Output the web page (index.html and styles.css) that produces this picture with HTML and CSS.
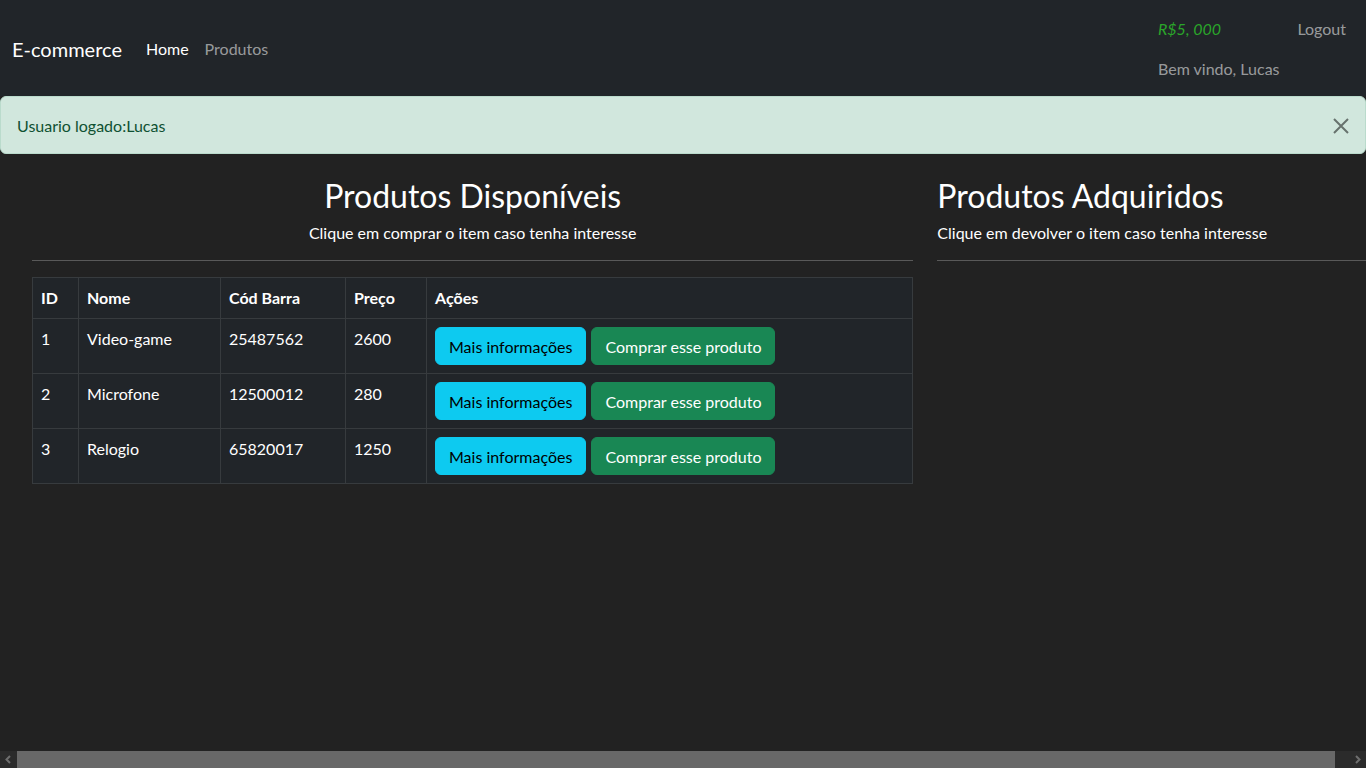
FILE: index.html
```html
<!DOCTYPE html>
<html lang="pt-BR">
<head>
<meta charset="utf-8">
<title>E-commerce</title>
<link rel="stylesheet" href="styles.css">
</head>
<body>
<nav class="navbar">
  <div class="nav-left">
    <a class="brand" href="#">E-commerce</a>
    <a class="nav-link active" href="#">Home</a>
    <a class="nav-link" href="#">Produtos</a>
  </div>
  <div class="nav-right">
    <div class="nav-row">
      <span class="nav-link saldo">R$5, 000</span>
      <a class="nav-link" href="#">Logout</a>
    </div>
    <div class="nav-row">
      <span class="nav-link">Bem vindo, Lucas</span>
    </div>
  </div>
</nav>

<div class="alert">
  <span>Usuario logado:Lucas</span>
  <button class="btn-close" aria-label="Fechar">
    <svg width="16" height="16" viewBox="0 0 16 16"><path d="M1 1L15 15M15 1L1 15" stroke="#000" stroke-width="2" fill="none"/></svg>
  </button>
</div>

<div class="row">
  <section class="col col-main">
    <h2 class="title centered">Produtos Disponíveis</h2>
    <p class="subtitle centered">Clique em comprar o item caso tenha interesse</p>
    <hr class="divider">
    <table class="table">
      <thead>
        <tr>
          <th class="c-id">ID</th>
          <th class="c-nome">Nome</th>
          <th class="c-cod">Cód Barra</th>
          <th class="c-preco">Preço</th>
          <th>Ações</th>
        </tr>
      </thead>
      <tbody>
        <tr>
          <td>1</td><td>Video-game</td><td>25487562</td><td>2600</td>
          <td><button class="btn btn-info">Mais informações</button> <button class="btn btn-success">Comprar esse produto</button></td>
        </tr>
        <tr>
          <td>2</td><td>Microfone</td><td>12500012</td><td>280</td>
          <td><button class="btn btn-info">Mais informações</button> <button class="btn btn-success">Comprar esse produto</button></td>
        </tr>
        <tr>
          <td>3</td><td>Relogio</td><td>65820017</td><td>1250</td>
          <td><button class="btn btn-info">Mais informações</button> <button class="btn btn-success">Comprar esse produto</button></td>
        </tr>
      </tbody>
    </table>
  </section>
  <section class="col col-side">
    <h2 class="title">Produtos Adquiridos</h2>
    <p class="subtitle">Clique em devolver o item caso tenha interesse</p>
    <hr class="divider">
  </section>
</div>

<div class="hscroll" aria-hidden="true">
  <span class="hscroll-arrow">
    <svg width="17" height="17" viewBox="0 0 17 17"><path d="M10 5L6.5 8.5L10 12" stroke="#6e6e6e" stroke-width="2" fill="none"/></svg>
  </span>
  <span class="hscroll-track"><span class="hscroll-thumb"></span></span>
  <span class="hscroll-arrow">
    <svg width="17" height="17" viewBox="0 0 17 17"><path d="M7 5L10.5 8.5L7 12" stroke="#6e6e6e" stroke-width="2" fill="none"/></svg>
  </span>
</div>
</body>
</html>
```

FILE: styles.css
```css
* { box-sizing: border-box; }

html, body {
  margin: 0;
  padding: 0;
}

html { overflow: hidden; }

body {
  background: #222222;
  color: #ffffff;
  font-family: "Lato", "Open Sans", sans-serif;
  font-size: 16px;
  line-height: 24px;
}

a { text-decoration: none; }

.navbar {
  background: #212529;
  height: 96px;
  padding: 9px 12px 7px;
  display: flex;
  align-items: center;
  justify-content: space-between;
}

.nav-left {
  display: flex;
  align-items: center;
}

.brand {
  color: #ffffff;
  font-size: 20px;
  line-height: 30px;
  margin-right: 16px;
}

.nav-link {
  display: block;
  padding: 8px;
  color: rgba(255, 255, 255, 0.55);
  line-height: 24px;
}

.nav-link.active { color: #ffffff; }

.nav-right {
  display: flex;
  flex-direction: column;
  width: 204px;
}

.nav-row {
  display: flex;
  justify-content: space-between;
}

.saldo {
  color: #2aa52a;
  font-style: italic;
}

.alert {
  background: #d1e7dd;
  color: #0f5132;
  border: 1px solid #badbcc;
  border-radius: 6px;
  padding: 17px 16px 15px;
  display: flex;
  align-items: center;
  justify-content: space-between;
  height: 58px;
}

.btn-close {
  background: none;
  border: 0;
  padding: 0;
  width: 16px;
  height: 16px;
  opacity: 0.5;
  display: flex;
}

.row {
  display: flex;
  margin-left: 20px;
  width: 1358px;
  padding-top: 23px;
}

.col { padding: 0 12px; }
.col-main { width: 66.6667%; }
.col-side { width: 33.3333%; }

.title {
  font-size: 32px;
  font-weight: 400;
  line-height: 38px;
  margin: 0 0 6px;
}

.subtitle {
  margin: 0;
}

.centered { text-align: center; }

.divider {
  border: 0;
  border-top: 1px solid rgba(255, 255, 255, 0.25);
  margin: 15px 0 16px;
}

.table {
  width: 100%;
  border-collapse: collapse;
  background: #212529;
  color: #ffffff;
}

.table th, .table td {
  border: 1px solid #373b3e;
  padding: 8px;
  text-align: left;
  line-height: 24px;
  vertical-align: top;
}

.table th { font-weight: 700; }

.c-id { width: 46px; }
.c-nome { width: 142px; }
.c-cod { width: 125px; }
.c-preco { width: 81px; }

.btn {
  font-family: inherit;
  font-size: 16px;
  line-height: 24px;
  padding: 7px 13px 5px;
  border: 1px solid transparent;
  border-radius: 6px;
  margin-right: 1px;
}

.btn-info {
  background: #0dcaf0;
  border-color: #0dcaf0;
  color: #000000;
}

.btn-success {
  background: #198754;
  border-color: #198754;
  color: #ffffff;
}

.hscroll {
  position: fixed;
  left: 0;
  right: 0;
  bottom: 0;
  height: 17px;
  background: #2b2b2b;
  display: flex;
}

.hscroll-arrow {
  width: 17px;
  height: 17px;
  display: flex;
}

.hscroll-track {
  flex: 1;
  display: flex;
}

.hscroll-thumb {
  width: 1318px;
  height: 17px;
  background: #686868;
}
```
